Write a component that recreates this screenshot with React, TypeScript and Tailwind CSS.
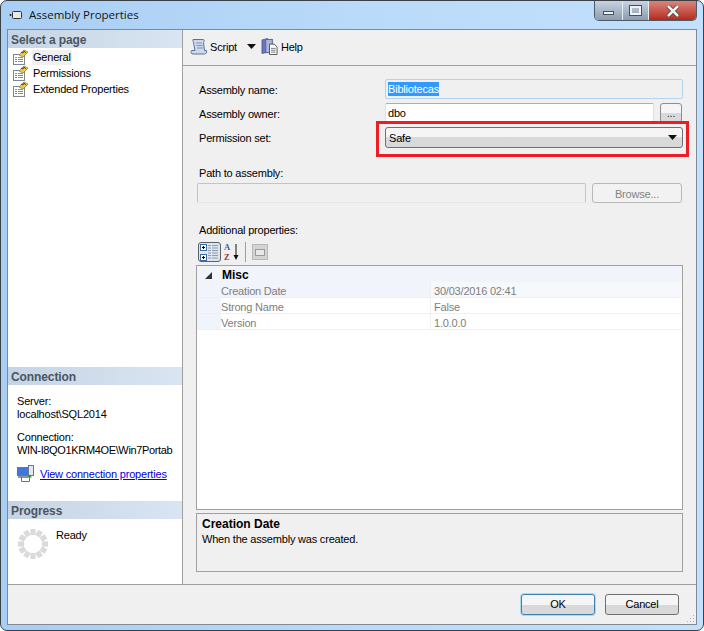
import React from "react";

const PageIcon = () => (
  <svg width="17" height="16" viewBox="0 0 17 16" className="shrink-0">
    <rect x="1.5" y="5.5" width="11" height="10" fill="#fff" stroke="#7d8794" />
    <path d="M3 8.5h2M6 8.5h5M3 10.5h2M6 10.5h5M3 12.5h2M6 12.5h5" stroke="#6f8fc0" />
    <path d="M7 6 12 1l4 2-5 5z" fill="#f3c93c" stroke="#8a7a3a" strokeWidth=".7" />
    <path d="M9 3l2 1 1-2 2 2" stroke="#444" strokeWidth="1" fill="none" />
  </svg>
);

const ScriptIcon = () => (
  <svg width="18" height="18" viewBox="0 0 18 18">
    <path d="M3 1.5h10c1.500 0 1.500 2 .5 3l1 8h2c.5 2-.5 3.500-2 3.500H3c-2 0-2.500-2-1.500-3.500H5L3.500 4.500C3 3 2.500 2 3 1.500z" fill="#cdd8ea" stroke="#5b7298" />
    <path d="M6 5h6M6.500 7.500h6M7 10h6" stroke="#7d93b8" />
  </svg>
);

const HelpIcon = () => (
  <svg width="17" height="17" viewBox="0 0 18 18">
    <path d="M1 2 7 0.500V15L1 16.500z" fill="#6b78b8" stroke="#3f4a85" strokeWidth=".7" />
    <rect x="5" y="1.500" width="7" height="14" fill="#aab4dc" stroke="#5560a0" />
    <path d="M9 6.500h5l3 3v8H9z" fill="#fff" stroke="#555" />
    <path d="M10.500 11h5M10.500 13h5M10.500 15h5" stroke="#777" />
  </svg>
);

const ConnIcon = () => (
  <svg width="17" height="17" viewBox="0 0 17 17" className="shrink-0">
    <rect x="0.500" y="2.500" width="10" height="8" fill="#3f78d8" stroke="#6a7788" />
    <rect x="11.500" y="0.500" width="5" height="10" fill="#e4e8ee" stroke="#6a7788" />
    <path d="M1 12h10" stroke="#8a94a4" strokeWidth="2" />
    <path d="M4.500 12v4.500h8V12" fill="none" stroke="#2f9a2f" />
    <path d="M12.500 9.500l-2.500 3h5z" fill="#2f9a2f" />
  </svg>
);

const Spinner = () => {
  const n = [0, 1, 2, 3, 4, 5, 6, 7, 8, 9, 10, 11];
  return (
    <svg width="30" height="30" viewBox="0 0 30 30" className="shrink-0 mt-[1px]">
      {n.map((i) => (
        <rect key={i} x="12.400" y="0" width="5.200" height="6" fill="#dadada" transform={`rotate(${i * 30} 15 15)`} />
      ))}
    </svg>
  );
};

const Caret = () => (
  <svg width="9" height="5" viewBox="0 0 9 5" className="shrink-0"><path d="M0 0h9L4.500 5z" fill="#111" /></svg>
);

const SideHeader = ({ children }: { children: React.ReactNode }) => (
  <div className="h-[18px] bg-gradient-to-r from-[#c5d4e4] to-[#d9e5f2] pl-[3px] text-[12px] tracking-[-0.1px] leading-[20px] font-bold text-[#4b5560]">
    {children}
  </div>
);

const Btn = "bg-gradient-to-b from-[#f5f5f5] from-50% to-[#d9d9d9] to-50% rounded-[3px]";

const Row = ({ a, b, shade }: { a: string; b: string; shade?: boolean }) => (
  <div className="flex h-4 items-center border-b border-[#f0f0f0]">
    <div className="w-6 h-full bg-[#f1f4fa]" />
    <div className={`w-[209px] h-full flex items-center pt-[2px] ${shade ? "bg-[#f1f4fa]" : ""}`}>{a}</div>
    <div className={`flex-1 h-full flex items-center border-l border-[#f0f0f0] pl-[3px] pt-[2px] ${shade ? "bg-[#f7f8fb]" : ""}`}>{b}</div>
  </div>
);

export default function App() {
  return (
    <div className="w-[704px] h-[631px] overflow-hidden bg-white text-[11px] tracking-[-0.2px] leading-[14px] text-black" style={{ fontFamily: '"Liberation Sans", sans-serif' }}>
      <div className="w-full h-full flex flex-col rounded-[7px] border border-[#3a4046] bg-gradient-to-r from-[#a9cef4] via-[#b9daf9] to-[#c3e0fc] px-[6px] pb-[5px]">
        {/* Title bar */}
        <div className="h-[28px] flex items-start shrink-0">
          <div className="flex items-center h-[28px] pl-[2px] gap-[7px]">
            <svg width="13" height="8" viewBox="0 0 13 8">
              <circle cx="1.500" cy="4" r="1" fill="#222" />
              <rect x="3.500" y="0.500" width="9" height="7" rx="1" fill="#e8e8e8" stroke="#333" />
            </svg>
            <span className="text-[11.500px] tracking-normal text-[#101820]" style={{ fontFamily: '"Open Sans", sans-serif' }}>Assembly Properties</span>
          </div>
          <div className="ml-auto mr-0 flex h-[20px] rounded-b-[5px] border border-t-0 border-[#4d5a66] overflow-hidden">
            <div className="w-[28px] flex items-center justify-center bg-gradient-to-b from-[#c7d3df] to-[#8d9daf] border-r border-[#e4ecf3]">
              <div className="w-[11px] h-[4px] mt-[4px] bg-[#eef2f6] border border-[#44505c]" />
            </div>
            <div className="w-[26px] flex items-center justify-center bg-gradient-to-b from-[#c7d3df] to-[#8d9daf] border-r border-[#e4ecf3]">
              <div className="w-[11px] h-[9px] border-2 border-[#eef2f6] outline outline-1 outline-[#44505c]" />
            </div>
            <div className="w-[47px] flex items-center justify-center bg-gradient-to-b from-[#d9837a] to-[#b5271c]">
              <svg width="14" height="12" viewBox="0 0 14 12">
                <path d="M2 1l10 10M12 1L2 11" stroke="#3c3c3c" strokeWidth="4" />
                <path d="M2 1l10 10M12 1L2 11" stroke="#f4f4f4" strokeWidth="2.500" />
              </svg>
            </div>
          </div>
        </div>

        {/* Client area */}
        <div className="flex-1 flex flex-col min-h-0 border border-[#7f8a94] bg-[#f0f0f0]">
          <div className="flex-1 flex min-h-0">
            {/* Left panel */}
            <div className="w-[175px] shrink-0 flex flex-col bg-white border-r border-[#a0a0a0]">
              <SideHeader>Select a page</SideHeader>
              <div className="h-[319px] pt-[1px]">
                <div className="flex items-center h-4 pl-[4px]">
                  <PageIcon />
                  <span className="ml-[3px] px-[1px] h-[15px] leading-[15px] bg-[#f0f0f0]">General</span>
                </div>
                <div className="flex items-center h-4 pl-[4px]">
                  <PageIcon />
                  <span className="ml-[4px]">Permissions</span>
                </div>
                <div className="flex items-center h-4 pl-[4px]">
                  <PageIcon />
                  <span className="ml-[4px]">Extended Properties</span>
                </div>
              </div>
              <SideHeader>Connection</SideHeader>
              <div className="h-[116px] pl-[9px] pt-[9px]">
                <div className="h-[13px]">Server:</div>
                <div className="h-[13px] whitespace-nowrap">localhost\SQL2014</div>
                <div className="h-[10px]" />
                <div className="h-[13px]">Connection:</div>
                <div className="h-[13px] whitespace-nowrap tracking-[-0.35px]">WIN-I8QO1KRM4OE\Win7Portab</div>
                <div className="flex items-center mt-[9px] gap-[6px]">
                  <ConnIcon />
                  <span className="text-[#0000e0] underline whitespace-nowrap">View connection properties</span>
                </div>
              </div>
              <SideHeader>Progress</SideHeader>
              <div className="flex-1 flex pl-[10px] pt-[9px] gap-[8px]">
                <Spinner />
                <span>Ready</span>
              </div>
            </div>

            {/* Right panel */}
            <div className="flex-1 flex flex-col min-w-0">
              <div className="h-[36px] shrink-0 flex items-center border-b border-[#a0a0a0] pl-[7px] pb-[2px]">
                <ScriptIcon />
                <span className="ml-[2px]">Script</span>
                <span className="ml-[10px] mr-[5px] flex"><Caret /></span>
                <HelpIcon />
                <span className="ml-[3px]">Help</span>
              </div>

              <div className="flex-1 flex flex-col pl-[16px] pr-[13px] min-h-0">
                <div className="flex items-center h-[20px] mt-[13px]">
                  <span className="w-[190px] shrink-0 pt-[2px]">Assembly name:</span>
                  <div className="ml-[-4px] flex-1 h-[20px] pl-[2px] flex items-center rounded-[2px] border border-[#b3d4ec] bg-[#f0f0f0]">
                    <span className="bg-[#3399ff] text-white">Bibliotecas</span>
                  </div>
                </div>
                <div className="flex items-center h-[20px] mt-[4px]">
                  <span className="w-[190px] shrink-0 pt-[2px]">Assembly owner:</span>
                  <div className="ml-[-4px] w-[269px] h-[20px] pl-[2px] flex items-center rounded-[2px] border border-[#dbdfe6] border-t-[#abadb3] bg-white">dbo</div>
                  <div className={`ml-[6px] w-[22px] h-[20px] border border-[#8e8e8e] ${Btn} flex items-center justify-center text-[#333]`}>...</div>
                </div>
                <div className="relative flex items-center h-[21px] mt-[4px]">
                  <span className="w-[190px] shrink-0">Permission set:</span>
                  <div className={`ml-[-4px] flex-1 h-[21px] pl-[3px] pr-[5px] flex items-center justify-between border border-[#707070] ${Btn}`}>
                    <span>Safe</span>
                    <Caret />
                  </div>
                  <div className="absolute left-[177px] top-[-6px] w-[313px] h-[36px] border-[3px] border-[#ee1c25] pointer-events-none" />
                </div>

                <div className="h-[14px] mt-[18px]">Path to assembly:</div>
                <div className="flex mt-[3px] items-center">
                  <div className="w-[389px] h-[20px] rounded-[2px] border border-[#c4c4c4] border-b-[#e6e6e6] bg-[#f0f0f0] ml-[-2px]" />
                  <div className="ml-[6px] w-[90px] h-[20px] pt-[2px] flex items-center justify-center rounded-[3px] border border-[#b8b8b8] bg-[#f2f2f2] text-[#838383]">Browse...</div>
                </div>

                <div className="h-[14px] mt-[20px]">Additional properties:</div>
                <div className="flex items-center h-[22px] mt-[4px] ml-[-1px]">
                  <div className="w-[23px] h-[20px] flex items-center justify-center rounded-[3px] border border-[#5c6068] bg-[#dfe5ec]">
                    <svg width="19" height="17" viewBox="0 0 19 17">
                      <rect x="0.500" y="0.500" width="6" height="6" fill="#fff" stroke="#3a6ea5" />
                      <rect x="0.500" y="10.500" width="6" height="6" fill="#fff" stroke="#3a6ea5" />
                      <path d="M2 3.500h3M3.500 2v3M2 13.500h3M3.500 12v3" stroke="#000" />
                      <path d="M8 1.500h3M12 1.500h6M8 4h3M12 4h6M8 6.500h3M12 6.500h6M8 9h3M12 9h6M8 11.500h3M12 11.500h6M8 14h3M12 14h6" stroke="#8b9bb0" />
                    </svg>
                  </div>
                  <svg width="16" height="20" viewBox="0 0 16 20" className="ml-[3px]">
                    <text x="0" y="8" fontSize="8.500" fontWeight="bold" fill="#2f5fb0" fontFamily="Liberation Serif, serif">A</text>
                    <text x="0" y="18" fontSize="8.500" fontWeight="bold" fill="#a03030" fontFamily="Liberation Serif, serif">Z</text>
                    <path d="M12 2v14" stroke="#111" />
                    <path d="M9.500 13h5L12 18z" fill="#111" />
                  </svg>
                  <div className="w-px h-[20px] bg-[#a0a0a0] ml-[5px]" />
                  <div className="ml-[6px] w-[16px] h-[16px] bg-[#d4d4d4] border border-[#b8b8b8] flex items-center justify-center">
                    <div className="w-[10px] h-[7px] border border-[#9a9a9a] bg-[#e8e8e8]" />
                  </div>
                </div>

                <div className="mt-[2px] h-[245px] w-[487px] ml-[-3px] shrink-0 border border-[#a0a0a0] bg-white text-[#7e7e7e]">
                  <div className="flex h-4 items-center bg-[#f1f4fa] text-black text-[12px] tracking-normal font-bold pt-[2px]">
                    <div className="w-[25px] pl-[8px]">
                      <svg width="7" height="7" viewBox="0 0 7 7"><path d="M7 0v7H0z" fill="#333" /></svg>
                    </div>
                    <span>Misc</span>
                  </div>
                  <Row a="Creation Date" b="30/03/2016 02:41" shade />
                  <Row a="Strong Name" b="False" />
                  <Row a="Version" b="1.0.0.0" />
                </div>

                <div className="mt-[3px] h-[59px] w-[487px] ml-[-3px] shrink-0 border border-[#a0a0a0] pl-[5px] pr-[5px] pt-[3px]">
                  <div className="font-bold text-[12px] tracking-normal h-[15px]">Creation Date</div>
                  <div>When the assembly was created.</div>
                </div>
              </div>
            </div>
          </div>

          {/* Footer */}
          <div className="relative h-[40px] shrink-0 border-t border-[#a0a0a0] flex items-center justify-end gap-[10px] pr-[17px] pb-[1px]">
            <div className={`w-[74px] h-[21px] flex items-center justify-center border border-[#3c7fb1] shadow-[0_0_0_1px_#a8dcf5] ${Btn}`}>OK</div>
            <div className={`w-[74px] h-[21px] flex items-center justify-center border border-[#707070] ${Btn}`}>Cancel</div>
            <svg width="10" height="10" viewBox="0 0 10 10" className="absolute right-[1px] bottom-[1px]">
              <path d="M8 2h1v1H8zM5 5h1v1H5zM8 5h1v1H8zM2 8h1v1H2zM5 8h1v1H5zM8 8h1v1H8z" fill="#b0b0b0" />
            </svg>
          </div>
        </div>
      </div>
    </div>
  );
}
